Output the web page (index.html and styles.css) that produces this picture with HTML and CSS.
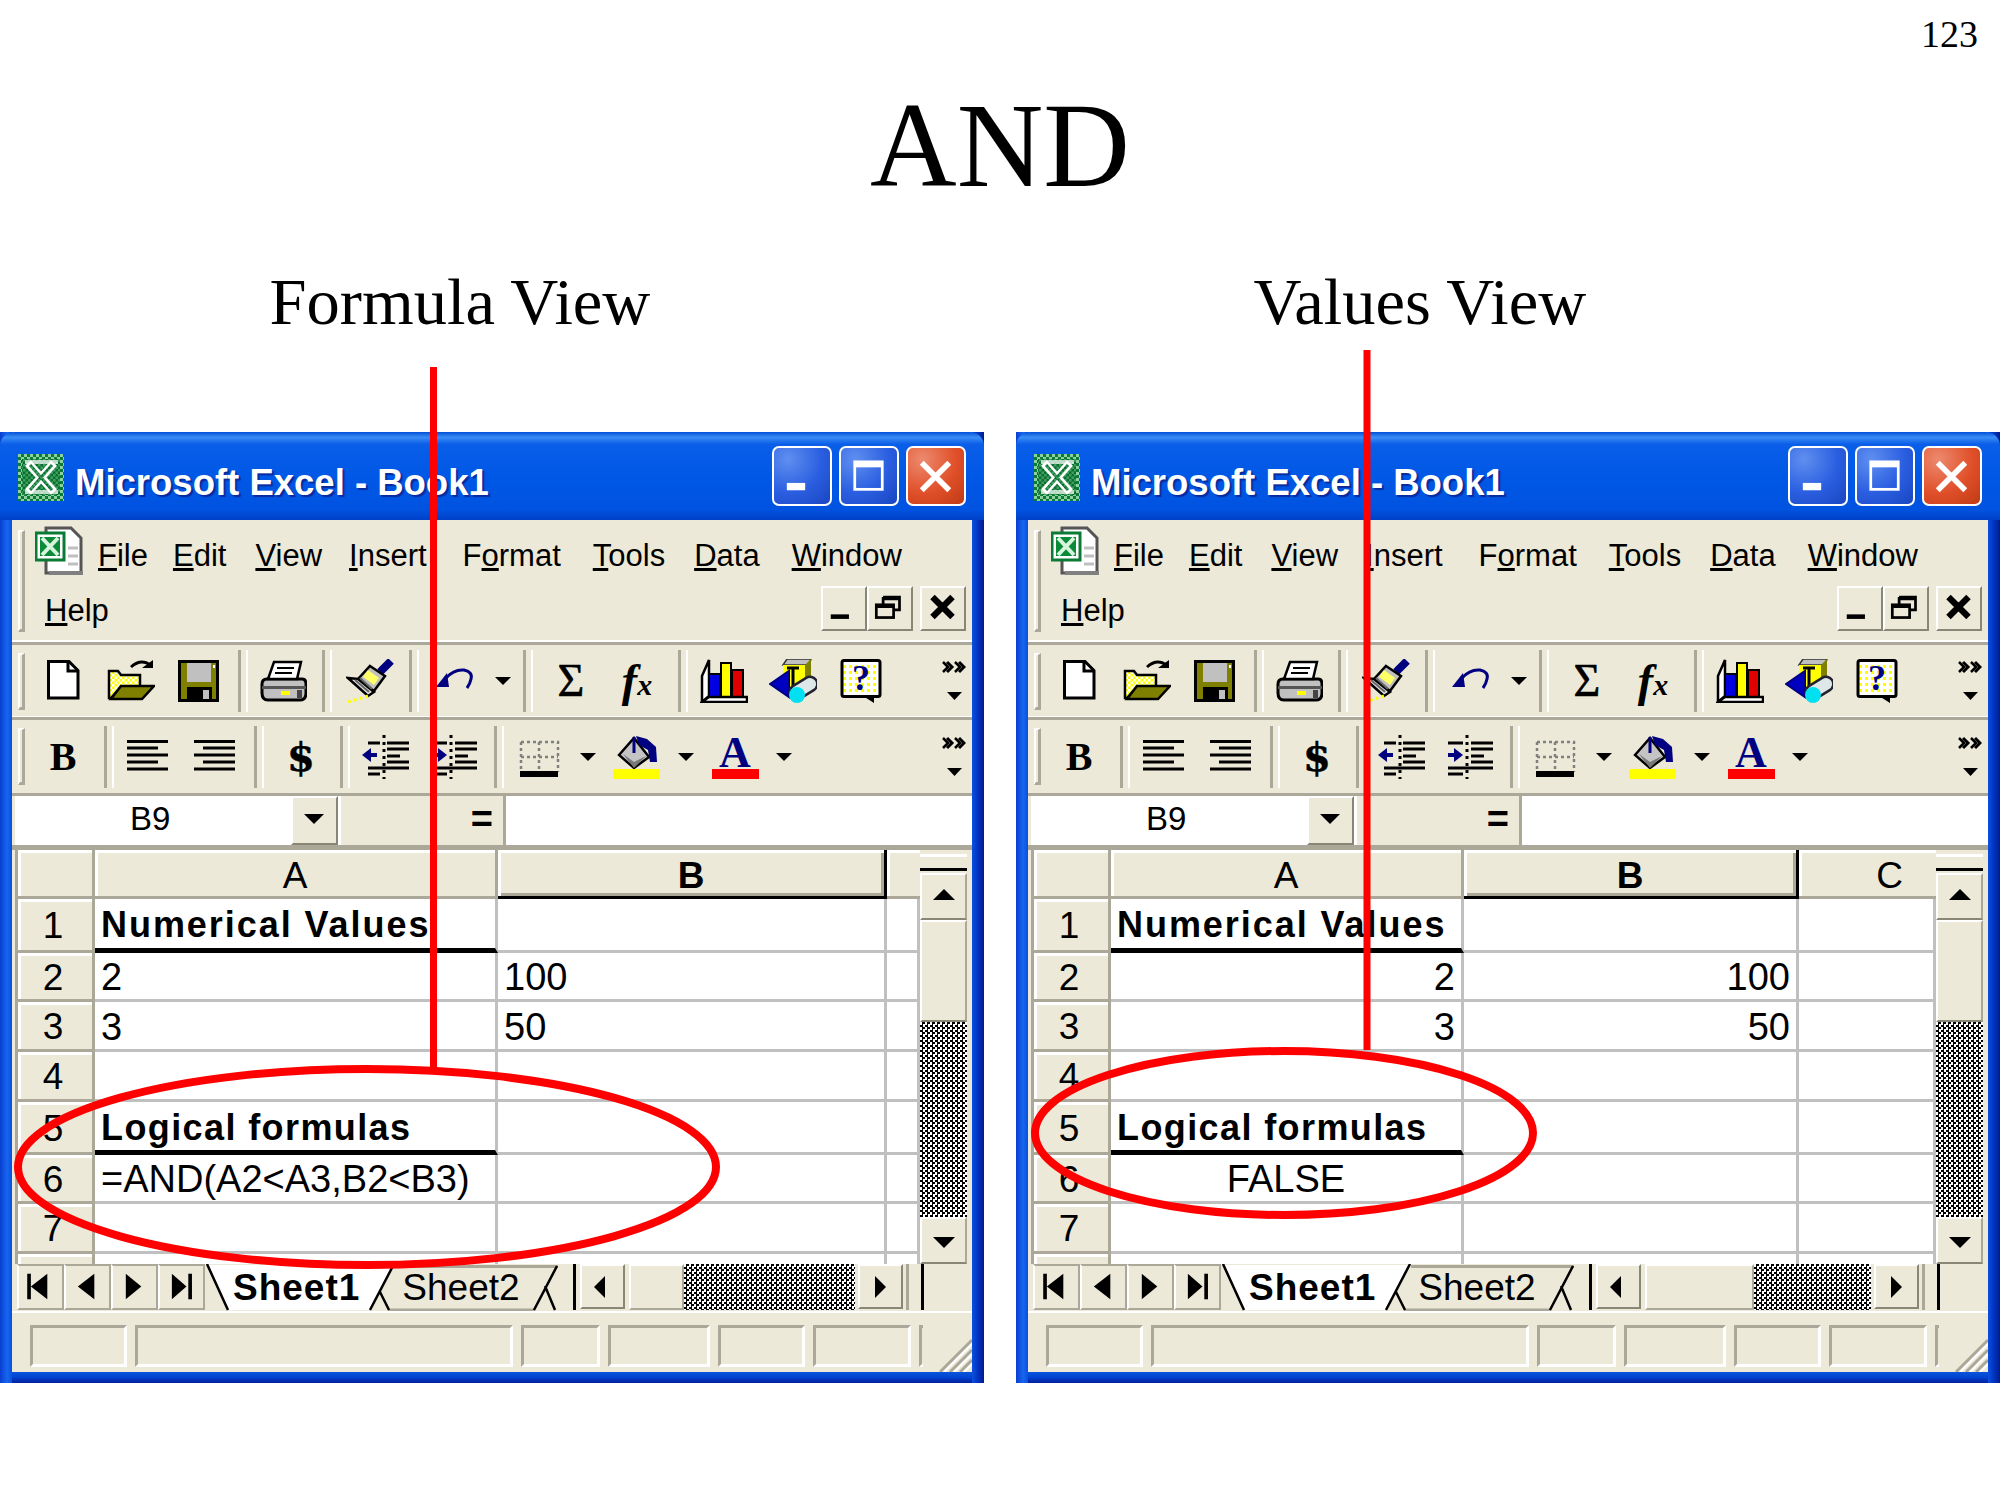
FILE: index.html
```html
<!DOCTYPE html>
<html lang="en">
<head>
<meta charset="utf-8">
<title>AND</title>
<link rel="stylesheet" href="styles.css">
</head>
<body>
<svg class="defs" aria-hidden="true">
  <defs>
    <pattern id="p-green" width="6" height="6" patternUnits="userSpaceOnUse"><rect width="6" height="6" fill="#0b7a35"/><rect width="3" height="3" fill="#8fd09f"/><rect x="3" y="3" width="3" height="3" fill="#8fd09f"/></pattern>
    <pattern id="p-deep" width="5" height="5" patternUnits="userSpaceOnUse"><rect width="5" height="5" fill="#0a6e30"/><rect width="2.5" height="2.5" fill="#3f9f5f"/><rect x="2.5" y="2.5" width="2.5" height="2.5" fill="#3f9f5f"/></pattern>
    <pattern id="p-yellow" width="5" height="5" patternUnits="userSpaceOnUse"><rect width="5" height="5" fill="#ffff00"/><rect width="2.5" height="2.5" fill="#fff"/><rect x="2.5" y="2.5" width="2.5" height="2.5" fill="#fff"/></pattern>
    <pattern id="p-dots" width="6" height="6" patternUnits="userSpaceOnUse"><rect width="6" height="6" fill="#fff"/><rect width="3" height="3" fill="#ffff00"/></pattern>
    <symbol id="i-xl" viewBox="0 0 46 47"><rect width="46" height="47" fill="url(#p-green)"/><rect x="4" y="5" width="38" height="36" fill="url(#p-deep)"/><path d="M7 6H40V10H7ZM7 36H40V40H7Z" fill="#fff" opacity=".7"/><path d="M10 9 36 38M36 9 10 38" stroke="#fff" stroke-width="8"/><path d="M12 11 34 36M34 11 12 36" stroke="url(#p-deep)" stroke-width="3"/></symbol>
    <symbol id="i-doc" viewBox="0 0 48 50"><path d="M11 2H36L46 12V47H11Z" fill="#fff" stroke="#555" stroke-width="3"/><path d="M14 47H48" stroke="#808080" stroke-width="4"/><path d="M33 22H43M33 30H43M33 38H43" stroke="#c0c0c0" stroke-width="3"/><rect x="1" y="7" width="28" height="27" fill="#fff" stroke="#0b7a35" stroke-width="3"/><rect x="5" y="11" width="20" height="19" fill="#0b8a3a"/><path d="M7 12 23 29M23 12 7 29" stroke="#d7f5dc" stroke-width="4"/></symbol>
    <symbol id="i-new" viewBox="0 0 48 44"><path d="M9.5 2.5H30L39 11.5V39H9.5Z" fill="#fff" stroke="#000" stroke-width="3"/><path d="M29 3V12H39" fill="none" stroke="#000" stroke-width="3"/></symbol>
    <symbol id="i-open" viewBox="0 0 48 44"><path d="M2 39V12H11L14 16H33V28L14 28 4 39Z" fill="url(#p-yellow)" stroke="#000" stroke-width="2.5"/><path d="M4 40 14 27H47L35 40Z" fill="#808000" stroke="#000" stroke-width="2.5"/><path d="M24 8Q33 0 42 5" fill="none" stroke="#000" stroke-width="3"/><path d="M35 9H46V1Z"/></symbol>
    <symbol id="i-save" viewBox="0 0 48 44"><rect x="3" y="1" width="41" height="42"/><rect x="6" y="4" width="35" height="36" fill="#808000"/><rect x="12" y="4" width="24" height="19" fill="#c0c0c0"/><rect x="38" y="6" width="2" height="3" fill="#fff"/><rect x="12" y="28" width="25" height="15"/><rect x="28" y="31" width="6" height="9" fill="#c0c0c0"/></symbol>
    <symbol id="i-print" viewBox="0 0 48 44"><path d="M3 25Q3 20 8 20H43Q47 20 47 25V34Q47 41 41 41H9Q3 41 3 34Z" fill="#c0c0c0" stroke="#000" stroke-width="3"/><path d="M15 3H42L38 20H9Z" fill="#fff" stroke="#000" stroke-width="2.5"/><path d="M18 9H35M16 14H33" stroke="#000" stroke-width="2"/><rect x="3" y="27" width="44" height="3" fill="#555"/><rect x="22" y="32" width="9" height="4" fill="#ffff00"/><rect x="38" y="31" width="5" height="8" fill="#444"/></symbol>
    <symbol id="i-brush" viewBox="0 0 48 44"><path d="M34 13 45 2" stroke="#000080" stroke-width="8"/><path d="M24 7 39 17 28 32 12 20Z" fill="#c0c0c0" stroke="#000" stroke-width="2.5"/><path d="M22 11 33 19 28 26 17 18Z" fill="#ffff66"/><path d="M12 20 28 33 22 37 2 19Z" fill="#e4e4e4" stroke="#000" stroke-width="2.5"/><path d="M9 21 23 33M14 19 26 30" stroke="#666" stroke-width="2"/><path d="M2 43 22 37" stroke="#ffff00" stroke-width="3" stroke-dasharray="3 3"/></symbol>
    <symbol id="i-undo" viewBox="0 0 48 44"><path d="M16 19Q24 10 34 11Q43 13 41 20Q40 25 37 29" fill="none" stroke="#000080" stroke-width="3"/><path d="M6 28H19L17 14Z" fill="#000080"/></symbol>
    <symbol id="i-chart" viewBox="0 0 48 44"><path d="M2 43V17L9 1V37Z" fill="#fff" stroke="#000" stroke-width="2.5"/><rect x="9" y="15" width="11" height="23" fill="#0000e0" stroke="#000" stroke-width="2"/><rect x="21" y="4" width="10" height="34" fill="#ffff00" stroke="#000" stroke-width="2"/><rect x="32" y="11" width="11" height="27" fill="#e00000" stroke="#000" stroke-width="2"/><path d="M2 43H47V38H9L2 43Z" fill="#fff" stroke="#000" stroke-width="2.5"/></symbol>
    <symbol id="i-map" viewBox="0 0 48 44"><path d="M14 6 18 0H42L40 6Z" fill="#c0c0c0" stroke="#333" stroke-width="1.5"/><rect x="14" y="6" width="26" height="26" fill="#ffff00"/><path d="M36 6 42 0V26L36 32Z" fill="#808000"/><path d="M18 9H30M24 9V30" stroke="#000" stroke-width="3"/><path d="M1 25 20 12V38Z" fill="#0000c0" stroke="#000080" stroke-width="2"/><path d="M28 33 41 25" stroke="#223" stroke-width="17" stroke-linecap="round"/><path d="M28 33 41 25" stroke="#dfe8e8" stroke-width="12" stroke-linecap="round"/><circle cx="28" cy="36" r="8" fill="#00e0f0"/></symbol>
    <symbol id="i-help" viewBox="0 0 48 44"><rect x="5" y="1.5" width="38" height="36" rx="2" fill="url(#p-dots)" stroke="#000" stroke-width="3"/><path d="M26 37H37V44Z"/><text x="24" y="31" class="help-q">?</text></symbol>
    <symbol id="i-alignl" viewBox="0 0 48 44"><path d="M3 6.500H44M3 13H34M3 20H44M3 27H34M3 34H44" stroke="#000" stroke-width="3"/></symbol>
    <symbol id="i-alignr" viewBox="0 0 48 44"><path d="M4 6.500H45M13 13H45M4 20H45M13 27H45M4 34H45" stroke="#000" stroke-width="3"/></symbol>
    <symbol id="i-outdent" viewBox="0 0 48 44"><path d="M1 20 10 13V27Z" fill="#000080"/><rect x="9" y="18" width="7" height="4" fill="#000080"/><path d="M7 8H19M26 8H48M26 14H48M26 21H39M7 33H48M7 39H19M26 27H48" stroke="#000" stroke-width="3"/><path d="M23 0V44" stroke="#000" stroke-width="3" stroke-dasharray="3 4"/></symbol>
    <symbol id="i-indent" viewBox="0 0 48 44"><path d="M18 20 9 13V27Z" fill="#000080"/><rect x="3" y="18" width="7" height="4" fill="#000080"/><path d="M3 8H18M26 8H48M26 14H48M26 21H39M3 33H48M3 39H18M26 27H48" stroke="#000" stroke-width="3"/><path d="M22 0V44" stroke="#000" stroke-width="3" stroke-dasharray="3 4"/></symbol>
    <symbol id="i-border" viewBox="0 0 48 44"><path d="M6 7H43V37M6 7V37M6 22H43M24 7V37" fill="none" stroke="#808080" stroke-width="2.500" stroke-dasharray="3 3"/><rect x="5" y="36" width="38" height="6"/></symbol>
    <symbol id="i-fill" viewBox="0 0 48 44"><path d="M6 20 21 3 36 22 21 33Z" fill="#c4c4c4" stroke="#000" stroke-width="2.500"/><path d="M10 19 21 27 33 21 21 33Z" fill="#777"/><path d="M23 1 34 4 43 12 44 27 37 27 35 15 26 10Z" fill="#000080"/><path d="M21 2V18" stroke="#000080" stroke-width="3"/><rect y="34" width="47" height="10" fill="#ffff00"/></symbol>
    <symbol id="i-more" viewBox="0 0 24 42"><path d="M1 2 6 7 1 12" fill="none" stroke="#000" stroke-width="2.500"/><path d="M5 2 10 7 5 12" fill="none" stroke="#000" stroke-width="3"/><path d="M13 2 18 7 13 12" fill="none" stroke="#000" stroke-width="2.500"/><path d="M17 2 22 7 17 12" fill="none" stroke="#000" stroke-width="3"/><path d="M5 32H20L12.500 40Z"/></symbol>
    <symbol id="i-tmin" viewBox="0 0 60 60"><rect x="14" y="37" width="20" height="8" fill="#fff"/></symbol>
    <symbol id="i-tmax" viewBox="0 0 60 60"><rect x="15" y="14" width="30" height="30" fill="none" stroke="#fff" stroke-width="3"/><rect x="15" y="14" width="30" height="6" fill="#fff"/></symbol>
    <symbol id="i-tclose" viewBox="0 0 60 60"><path d="M15 15 45 45M45 15 15 45" stroke="#fff" stroke-width="6"/></symbol>
    <symbol id="i-mmin" viewBox="0 0 44 44"><rect x="8" y="29" width="20" height="5"/></symbol>
    <symbol id="i-mres" viewBox="0 0 44 44"><path d="M15 10H33V24H26M15 10V18M15 12H33" fill="none" stroke="#000" stroke-width="3"/><rect x="7.500" y="18.500" width="19" height="14" fill="none" stroke="#000" stroke-width="3"/><rect x="7" y="18" width="20" height="4"/></symbol>
    <symbol id="i-mclose" viewBox="0 0 44 44"><path d="M11 10 33 32M33 10 11 32" stroke="#000" stroke-width="7"/></symbol>
    <symbol id="i-first" viewBox="0 0 46 44"><rect x="9" y="8" width="4" height="28"/><path d="M31 8V36L13 22Z"/></symbol>
    <symbol id="i-prev" viewBox="0 0 46 44"><path d="M31 8V36L13 22Z"/></symbol>
    <symbol id="i-next" viewBox="0 0 46 44"><path d="M14 8V36L31 22Z"/></symbol>
    <symbol id="i-last" viewBox="0 0 46 44"><path d="M13 8V36L29 22Z"/><rect x="31" y="8" width="4" height="28"/></symbol>
    <symbol id="i-tabs" viewBox="0 0 369 47"><path d="M2 1 23 46H165L190 1Z" fill="#fff"/><path d="M190 2.500H353M183 46H330" stroke="#aca899" stroke-width="3"/><path d="M2 0 23 46M165 46 189 0M175 28 184 46M329 46 352 2M340 22 350 46" stroke="#000" stroke-width="2.500" fill="none"/></symbol>
    <symbol id="i-gripper" viewBox="0 0 36 36"><path d="M4 36 36 4M14 36 36 14M24 36 36 24" stroke="#aca899" stroke-width="3"/><path d="M8 36 36 8M18 36 36 18M28 36 36 28" stroke="#fff" stroke-width="2"/></symbol>
  </defs>
</svg>

<main class="slide">
  <div class="page-no">123</div>
  <h1 class="title">AND</h1>
  <div class="captions">
    <h2 class="caption">Formula View</h2>
    <h2 class="caption">Values View</h2>
  </div>

  <div class="desktop">
    <section class="window win-formula">
      <header class="titlebar">
        <svg class="tb-icon"><use href="#i-xl"/></svg>
        <span class="tb-text">Microsoft Excel - Book1</span>
        <div class="tb-buttons">
          <button class="wbtn"><svg class="wbtn-i"><use href="#i-tmin"/></svg></button>
          <button class="wbtn"><svg class="wbtn-i"><use href="#i-tmax"/></svg></button>
          <button class="wbtn wbtn-close"><svg class="wbtn-i"><use href="#i-tclose"/></svg></button>
        </div>
      </header>
      <div class="client">
        <nav class="menubar">
          <span class="grip grip-tall"></span>
          <div class="menu-rows">
            <div class="menu-row">
              <svg class="doc-icon"><use href="#i-doc"/></svg>
              <span class="mi"><u>F</u>ile</span><span class="mi"><u>E</u>dit</span><span class="mi"><u>V</u>iew</span><span class="mi"><u>I</u>nsert</span><span class="mi">F<u>o</u>rmat</span><span class="mi"><u>T</u>ools</span><span class="mi"><u>D</u>ata</span><span class="mi"><u>W</u>indow</span>
            </div>
            <div class="menu-row menu-row-2">
              <span class="mi mi-help"><u>H</u>elp</span>
              <div class="mdi">
                <span class="mbtn"><svg class="mbtn-i"><use href="#i-mmin"/></svg></span><span class="mbtn"><svg class="mbtn-i"><use href="#i-mres"/></svg></span><span class="mbtn mbtn-close"><svg class="mbtn-i"><use href="#i-mclose"/></svg></span>
              </div>
            </div>
          </div>
        </nav>
        <div class="toolbar tb-std">
          <span class="grip"></span>
          <span class="tool"><svg class="ico"><use href="#i-new"/></svg></span>
          <span class="tool"><svg class="ico"><use href="#i-open"/></svg></span>
          <span class="tool"><svg class="ico"><use href="#i-save"/></svg></span>
          <span class="sep"></span>
          <span class="tool"><svg class="ico"><use href="#i-print"/></svg></span>
          <span class="sep sep-w"></span>
          <span class="tool"><svg class="ico"><use href="#i-brush"/></svg></span>
          <span class="sep"></span>
          <span class="tool"><svg class="ico"><use href="#i-undo"/></svg></span>
          <span class="drop"></span>
          <span class="sep sep-w"></span>
          <span class="tool glyph-sigma">Σ</span>
          <span class="tool glyph-fx"><i class="fx-f">f</i><i class="fx-x">x</i></span>
          <span class="sep"></span>
          <span class="tool tool-w"><svg class="ico"><use href="#i-chart"/></svg></span>
          <span class="tool tool-w"><svg class="ico"><use href="#i-map"/></svg></span>
          <span class="tool"><svg class="ico"><use href="#i-help"/></svg></span>
          <svg class="more"><use href="#i-more"/></svg>
        </div>
        <div class="toolbar tb-fmt">
          <span class="grip"></span>
          <span class="tool glyph-b">B</span>
          <span class="sep"></span>
          <span class="tool tool-n"><svg class="ico"><use href="#i-alignl"/></svg></span>
          <span class="tool tool-n"><svg class="ico"><use href="#i-alignr"/></svg></span>
          <span class="sep"></span>
          <span class="tool glyph-dollar">$</span>
          <span class="sep"></span>
          <span class="tool"><svg class="ico"><use href="#i-outdent"/></svg></span>
          <span class="tool"><svg class="ico"><use href="#i-indent"/></svg></span>
          <span class="sep"></span>
          <span class="tool"><svg class="ico"><use href="#i-border"/></svg></span>
          <span class="drop"></span>
          <span class="tool"><svg class="ico"><use href="#i-fill"/></svg></span>
          <span class="drop"></span>
          <span class="tool tool-a"><span class="glyph-a">A</span><span class="swatch"></span></span>
          <span class="drop"></span>
          <svg class="more"><use href="#i-more"/></svg>
        </div>
        <div class="formula-bar">
          <div class="namebox"><span class="namebox-text">B9</span><span class="combo"></span></div>
          <div class="fx-area">=</div>
          <div class="formula-input"></div>
        </div>
        <div class="sheet-wrap">
          <div class="sheet">
            <div class="hdr"></div><div class="hdr">A</div><div class="hdr hdr-sel">B</div><div class="hdr hdr-last"></div>
            <div class="rh">1</div><div class="cell cell-b cell-wide under">Numerical Values</div><div class="cell"></div><div class="cell"></div>
            <div class="rh">2</div><div class="cell">2</div><div class="cell">100</div><div class="cell"></div>
            <div class="rh">3</div><div class="cell">3</div><div class="cell">50</div><div class="cell"></div>
            <div class="rh">4</div><div class="cell"></div><div class="cell"></div><div class="cell"></div>
            <div class="rh">5</div><div class="cell cell-b under">Logical formulas</div><div class="cell"></div><div class="cell"></div>
            <div class="rh">6</div><div class="cell">=AND(A2&lt;A3,B2&lt;B3)</div><div class="cell"></div><div class="cell"></div>
            <div class="rh">7</div><div class="cell"></div><div class="cell"></div><div class="cell"></div>
            <div class="rh rh-end"></div><div class="cell cell-end"></div><div class="cell cell-end"></div><div class="cell cell-end"></div>
          </div>
          <div class="vscroll">
            <span class="vsplit"></span>
            <span class="sbtn sbtn-v"><span class="tri-up"></span></span>
            <span class="vthumb"></span>
            <span class="checker"></span>
            <span class="sbtn sbtn-v"><span class="tri-down"></span></span>
          </div>
        </div>
        <div class="tabbar">
          <span class="navbtn"><svg class="nav-i"><use href="#i-first"/></svg></span><span class="navbtn"><svg class="nav-i"><use href="#i-prev"/></svg></span><span class="navbtn"><svg class="nav-i"><use href="#i-next"/></svg></span><span class="navbtn"><svg class="nav-i"><use href="#i-last"/></svg></span>
          <div class="tabs">
            <svg class="tabs-art"><use href="#i-tabs"/></svg>
            <span class="tab tab-on">Sheet1</span><span class="tab">Sheet2</span>
          </div>
          <span class="hsplit"></span>
          <span class="sbtn sbtn-h"><span class="tri-left"></span></span>
          <span class="hthumb"></span>
          <span class="checker"></span>
          <span class="sbtn sbtn-h"><span class="tri-right"></span></span>
          <span class="hend"></span>
        </div>
        <footer class="status">
          <span class="panel p1"></span><span class="panel p2"></span><span class="panel p3"></span><span class="panel p4"></span><span class="panel p5"></span><span class="panel p6"></span><span class="panel p7"></span>
          <svg class="gripper"><use href="#i-gripper"/></svg>
        </footer>
      </div>
    </section>

    <section class="window win-values">
      <header class="titlebar">
        <svg class="tb-icon"><use href="#i-xl"/></svg>
        <span class="tb-text">Microsoft Excel - Book1</span>
        <div class="tb-buttons">
          <button class="wbtn"><svg class="wbtn-i"><use href="#i-tmin"/></svg></button>
          <button class="wbtn"><svg class="wbtn-i"><use href="#i-tmax"/></svg></button>
          <button class="wbtn wbtn-close"><svg class="wbtn-i"><use href="#i-tclose"/></svg></button>
        </div>
      </header>
      <div class="client">
        <nav class="menubar">
          <span class="grip grip-tall"></span>
          <div class="menu-rows">
            <div class="menu-row">
              <svg class="doc-icon"><use href="#i-doc"/></svg>
              <span class="mi"><u>F</u>ile</span><span class="mi"><u>E</u>dit</span><span class="mi"><u>V</u>iew</span><span class="mi"><u>I</u>nsert</span><span class="mi">F<u>o</u>rmat</span><span class="mi"><u>T</u>ools</span><span class="mi"><u>D</u>ata</span><span class="mi"><u>W</u>indow</span>
            </div>
            <div class="menu-row menu-row-2">
              <span class="mi mi-help"><u>H</u>elp</span>
              <div class="mdi">
                <span class="mbtn"><svg class="mbtn-i"><use href="#i-mmin"/></svg></span><span class="mbtn"><svg class="mbtn-i"><use href="#i-mres"/></svg></span><span class="mbtn mbtn-close"><svg class="mbtn-i"><use href="#i-mclose"/></svg></span>
              </div>
            </div>
          </div>
        </nav>
        <div class="toolbar tb-std">
          <span class="grip"></span>
          <span class="tool"><svg class="ico"><use href="#i-new"/></svg></span>
          <span class="tool"><svg class="ico"><use href="#i-open"/></svg></span>
          <span class="tool"><svg class="ico"><use href="#i-save"/></svg></span>
          <span class="sep"></span>
          <span class="tool"><svg class="ico"><use href="#i-print"/></svg></span>
          <span class="sep sep-w"></span>
          <span class="tool"><svg class="ico"><use href="#i-brush"/></svg></span>
          <span class="sep"></span>
          <span class="tool"><svg class="ico"><use href="#i-undo"/></svg></span>
          <span class="drop"></span>
          <span class="sep sep-w"></span>
          <span class="tool glyph-sigma">Σ</span>
          <span class="tool glyph-fx"><i class="fx-f">f</i><i class="fx-x">x</i></span>
          <span class="sep"></span>
          <span class="tool tool-w"><svg class="ico"><use href="#i-chart"/></svg></span>
          <span class="tool tool-w"><svg class="ico"><use href="#i-map"/></svg></span>
          <span class="tool"><svg class="ico"><use href="#i-help"/></svg></span>
          <svg class="more"><use href="#i-more"/></svg>
        </div>
        <div class="toolbar tb-fmt">
          <span class="grip"></span>
          <span class="tool glyph-b">B</span>
          <span class="sep"></span>
          <span class="tool tool-n"><svg class="ico"><use href="#i-alignl"/></svg></span>
          <span class="tool tool-n"><svg class="ico"><use href="#i-alignr"/></svg></span>
          <span class="sep"></span>
          <span class="tool glyph-dollar">$</span>
          <span class="sep"></span>
          <span class="tool"><svg class="ico"><use href="#i-outdent"/></svg></span>
          <span class="tool"><svg class="ico"><use href="#i-indent"/></svg></span>
          <span class="sep"></span>
          <span class="tool"><svg class="ico"><use href="#i-border"/></svg></span>
          <span class="drop"></span>
          <span class="tool"><svg class="ico"><use href="#i-fill"/></svg></span>
          <span class="drop"></span>
          <span class="tool tool-a"><span class="glyph-a">A</span><span class="swatch"></span></span>
          <span class="drop"></span>
          <svg class="more"><use href="#i-more"/></svg>
        </div>
        <div class="formula-bar">
          <div class="namebox"><span class="namebox-text">B9</span><span class="combo"></span></div>
          <div class="fx-area">=</div>
          <div class="formula-input"></div>
        </div>
        <div class="sheet-wrap">
          <div class="sheet">
            <div class="hdr"></div><div class="hdr">A</div><div class="hdr hdr-sel">B</div><div class="hdr hdr-c">C</div>
            <div class="rh">1</div><div class="cell cell-b cell-wide under">Numerical Values</div><div class="cell"></div><div class="cell"></div>
            <div class="rh">2</div><div class="cell cell-r">2</div><div class="cell cell-r">100</div><div class="cell"></div>
            <div class="rh">3</div><div class="cell cell-r">3</div><div class="cell cell-r">50</div><div class="cell"></div>
            <div class="rh">4</div><div class="cell"></div><div class="cell"></div><div class="cell"></div>
            <div class="rh">5</div><div class="cell cell-b under">Logical formulas</div><div class="cell"></div><div class="cell"></div>
            <div class="rh">6</div><div class="cell cell-c">FALSE</div><div class="cell"></div><div class="cell"></div>
            <div class="rh">7</div><div class="cell"></div><div class="cell"></div><div class="cell"></div>
            <div class="rh rh-end"></div><div class="cell cell-end"></div><div class="cell cell-end"></div><div class="cell cell-end"></div>
          </div>
          <div class="vscroll">
            <span class="vsplit"></span>
            <span class="sbtn sbtn-v"><span class="tri-up"></span></span>
            <span class="vthumb"></span>
            <span class="checker"></span>
            <span class="sbtn sbtn-v"><span class="tri-down"></span></span>
          </div>
        </div>
        <div class="tabbar">
          <span class="navbtn"><svg class="nav-i"><use href="#i-first"/></svg></span><span class="navbtn"><svg class="nav-i"><use href="#i-prev"/></svg></span><span class="navbtn"><svg class="nav-i"><use href="#i-next"/></svg></span><span class="navbtn"><svg class="nav-i"><use href="#i-last"/></svg></span>
          <div class="tabs">
            <svg class="tabs-art"><use href="#i-tabs"/></svg>
            <span class="tab tab-on">Sheet1</span><span class="tab">Sheet2</span>
          </div>
          <span class="hsplit"></span>
          <span class="sbtn sbtn-h"><span class="tri-left"></span></span>
          <span class="hthumb"></span>
          <span class="checker"></span>
          <span class="sbtn sbtn-h"><span class="tri-right"></span></span>
          <span class="hend"></span>
        </div>
        <footer class="status">
          <span class="panel p1"></span><span class="panel p2"></span><span class="panel p3"></span><span class="panel p4"></span><span class="panel p5"></span><span class="panel p6"></span><span class="panel p7"></span>
          <svg class="gripper"><use href="#i-gripper"/></svg>
        </footer>
      </div>
    </section>
  </div>

  <svg class="annot" viewBox="0 0 2000 1500" aria-hidden="true">
    <path class="annot-line" d="M433.500 367V1068"/>
    <path class="annot-line" d="M1367 350V1050"/>
    <ellipse class="annot-oval" cx="367" cy="1167" rx="349" ry="98"/>
    <ellipse class="annot-oval" cx="1284" cy="1133" rx="249" ry="82"/>
  </svg>
</main>
</body>
</html>
```
FILE: styles.css
```css
* { box-sizing: border-box; }
html, body { margin: 0; padding: 0; background: #fff; }
.defs { position: absolute; width: 0; height: 0; }

.slide {
  position: relative;
  width: 2000px;
  height: 1500px;
  overflow: hidden;
  background: #fff;
  color: #000;
  font-family: "Liberation Serif", serif;
}
.page-no { height: 60px; padding: 12px 22px 0 0; text-align: right; font-size: 38px; line-height: 44px; }
.title { margin: 0; height: 160px; padding-top: 12px; text-align: center; font-size: 120px; line-height: 148px; font-weight: 400; }
.captions { display: grid; grid-template-columns: 920px 1000px; height: 212px; }
.caption { margin: 0; padding-top: 43px; text-align: center; font-size: 66.500px; line-height: 78px; font-weight: 400; }

.desktop { display: flex; gap: 32px; }
.window {
  width: 984px;
  height: 951px;
  flex: none;
  display: flex;
  flex-direction: column;
  background:
    linear-gradient(to right, #0a3ed0, #1666ee 60%, #0a4fe0) left / 12px 100% no-repeat,
    linear-gradient(to right, #0b50e0, #0033c0, #001c90) right / 12px 100% no-repeat,
    linear-gradient(#0855dd, #0043d0 50%, #001f9c) bottom / 100% 11px no-repeat,
    #ece9d8;
  font-family: "Liberation Sans", Arial, sans-serif;
  font-size: 38px;
}

/* Title bar */
.titlebar {
  height: 88px;
  flex: none;
  display: flex;
  align-items: center;
  padding: 0 18px;
  border-radius: 14px 14px 0 0;
  background: linear-gradient(#0050d8 0, #3a8cf5 6%, #0a5ee8 14%, #0058e6 50%, #0053e0 88%, #0040c8 100%);
}
.tb-icon { width: 46px; height: 47px; flex: none; margin-top: 2px; }
.tb-text {
  margin-left: 11px;
  margin-top: 14px;
  color: #fff;
  font-size: 36.500px;
  font-weight: 700;
  white-space: nowrap;
  text-shadow: 2px 2px 1px #0a2a9c;
}
.tb-buttons { margin-left: auto; display: flex; gap: 7px; }
.wbtn {
  width: 60px;
  height: 60px;
  padding: 0;
  border: 2.500px solid #fff;
  border-radius: 7px;
  background: radial-gradient(circle at 25% 20%, #5f8ff0, #2a5ee0 55%, #1a46c0 100%);
}
.wbtn-close { background: radial-gradient(circle at 25% 20%, #ec8a6e, #e0502a 55%, #c03a14 100%); }
.wbtn-i { display: block; width: 55px; height: 55px; }

/* Client */
.client { flex: 1; min-height: 0; margin: 0 12px 11px; display: flex; flex-direction: column; background: #ece9d8; }

.grip {
  width: 7px;
  height: 57px;
  flex: none;
  margin: 0 4px 0 6px;
  border-left: 2px solid #fff;
  border-top: 2px solid #fff;
  border-bottom: 3px solid #aca899;
  border-right: 3px solid #aca899;
}
.grip-tall { height: 102px; margin-top: 10px; }

/* Menu */
.menubar { height: 125px; flex: none; display: flex; border-bottom: 3px solid #aca899; box-shadow: inset 0 -2px 0 #fff; }
.menu-rows { flex: 1; min-width: 0; display: flex; flex-direction: column; }
.menu-row { height: 66px; display: flex; align-items: center; gap: 29px; padding-left: 6px; }
.menu-row-2 { height: 54px; align-items: flex-start; padding-left: 17px; padding-right: 6px; }
.doc-icon { width: 48px; height: 50px; flex: none; margin-right: -12px; margin-top: -4px; }
.mi { font-size: 31px; line-height: 36px; white-space: nowrap; margin-top: 5px; }
.menu-row .mi:nth-of-type(1) { margin-left: -2px; }
.menu-row .mi:nth-of-type(2) { margin-left: -4px; }
.menu-row .mi:nth-of-type(4) { margin-left: -2px; }
.menu-row .mi:nth-of-type(5) { margin-left: 7px; }
.menu-row .mi:nth-of-type(6) { margin-left: 3px; }
.menu-row .mi:nth-of-type(8) { margin-left: 3px; }
.menu-row .mi-help:nth-of-type(1) { margin: 7px 0 0 -1px; }
.mdi { margin-left: auto; display: flex; }
.mbtn {
  width: 46px;
  height: 45px;
  border: 2.500px solid;
  border-color: #fff #888674 #888674 #fff;
}
.mbtn-close { margin-left: 7px; }
.mbtn-i { display: block; width: 41px; height: 40px; }

/* Toolbars */
.toolbar { flex: none; display: flex; align-items: center; padding-right: 6px; border-bottom: 3px solid #aca899; }
.tb-std { height: 75px; box-shadow: inset 0 -1px 0 #fff; }
.tb-fmt { height: 76px; }
.tool { width: 68px; height: 44px; flex: none; display: flex; align-items: center; justify-content: center; }
.tool-n { width: 66px; }
.tool-w { width: 69px; }
.ico { display: block; width: 48px; height: 44px; }
.sep { width: 16px; height: 62px; flex: none; position: relative; }
.sep-w { width: 19px; }
.sep::before {
  content: "";
  position: absolute;
  left: 5px;
  top: 0;
  width: 5px;
  height: 100%;
  border-left: 3px solid #aca899;
  border-right: 2px solid #fff;
}
.tb-fmt .sep { width: 18px; }
.tb-fmt .sep::before { left: 7px; }
.drop { width: 30px; height: 12px; flex: none; position: relative; }
.drop::after {
  content: "";
  position: absolute;
  left: 7px;
  top: 2px;
  border-left: 8px solid transparent;
  border-right: 8px solid transparent;
  border-top: 8px solid #000;
}
.more { width: 24px; height: 42px; flex: none; margin-left: auto; }
.glyph-sigma { font: 400 46px/44px "Liberation Serif", serif; -webkit-text-stroke: .6px #000; }
.glyph-fx { font: italic 700 44px/44px "Liberation Serif", serif; padding-right: 4px; }
.fx-f { font-size: 46px; }
.fx-x { font-size: 30px; margin-top: 8px; }
.glyph-b { font: 700 40px/44px "Liberation Serif", serif; }
.glyph-dollar { font: 700 40px/44px "DejaVu Serif", serif; padding-left: 4px; -webkit-text-stroke: .5px #000; }
.tool-a { flex-direction: column; justify-content: flex-start; }
.glyph-a { height: 34px; font: 700 44px/36px "Liberation Serif", serif; color: #000080; }
.swatch { width: 47px; height: 10px; background: #f00; }

/* Formula bar */
.formula-bar { height: 54px; flex: none; display: flex; padding-left: 3px; border-bottom: 5px solid #aca899; }
.namebox { width: 323px; flex: none; display: flex; align-items: stretch; background: #fff; }
.namebox-text { width: 276px; padding-left: 115px; font-size: 33px; line-height: 46px; }
.combo {
  width: 47px;
  margin-left: auto;
  position: relative;
  background: #ece9d8;
  border: 2.500px solid;
  border-color: #fff #888674 #888674 #fff;
}
.combo::after {
  content: "";
  position: absolute;
  left: 11px;
  top: 16px;
  border-left: 10px solid transparent;
  border-right: 10px solid transparent;
  border-top: 10px solid #000;
}
.fx-area { width: 168px; flex: none; padding-right: 10px; text-align: right; font-size: 38px; font-weight: 700; line-height: 46px; border-left: 3px solid #fff; border-right: 3px solid #aca899; }
.formula-input { flex: 1; background: #fff; }

/* Sheet */
.sheet-wrap { height: 414px; flex: none; display: flex; padding-left: 3px; }
.sheet {
  width: 905px;
  flex: none;
  display: grid;
  grid-template-rows: 49px 54px 49px 50px 50px 53px 49px 50px 10px;
  border-left: 3px solid #aca899;
  overflow: hidden;
  background: #fff;
}
.win-formula .sheet { grid-template-columns: 77px 403px 389px 33px; }
.win-values .sheet { grid-template-columns: 77px 353px 335px 137px; }
.hdr, .rh {
  display: flex;
  align-items: center;
  justify-content: center;
  background: #ece9d8;
  border-right: 3px solid #aca899;
  border-bottom: 3px solid #aca899;
  box-shadow: inset 3px 3px 0 #fff;
  font-size: 37px;
}
.hdr { padding-top: 5px; }
.rh { padding: 3px 4px 0 0; }
.hdr-sel { font-weight: 700; border-right-color: #000; border-bottom-color: #000; box-shadow: inset 3px 3px 0 #fff, inset -3px -3px 0 #aca899; }
.hdr-last, .hdr-c { border-right: 0; }
.hdr-c { justify-content: flex-end; padding-right: 33px; }
.rh-end { border-bottom: 0; }
.cell {
  min-width: 0;
  padding: 3px 6px 0;
  display: flex;
  align-items: center;
  white-space: nowrap;
  overflow: hidden;
  border-right: 3px solid #c0c0c0;
  border-bottom: 3px solid #c0c0c0;
  font-size: 38px;
}
.cell-b { font-size: 36px; font-weight: 700; letter-spacing: 1.400px; }
.cell-wide { letter-spacing: 1.950px; }
.under { border-bottom: 5px solid #000; }
.cell-r { justify-content: flex-end; }
.cell-c { justify-content: center; }
.cell-end { border-bottom: 0; }

/* Scrollbars */
.vscroll { width: 47px; flex: none; display: flex; flex-direction: column; }
.vsplit { height: 17px; flex: none; margin-top: 4px; margin-bottom: 2px; border-bottom: 3px solid #000; box-shadow: inset 0 3px 0 #fff; }
.sbtn { display: flex; align-items: center; justify-content: center; background: #ece9d8; flex: none; border: 2.500px solid; border-color: #fff #aca899 #888674 #fff; }
.sbtn-v { width: 47px; height: 47px; }
.sbtn-v:nth-of-type(2) { padding-bottom: 5px; }
.sbtn-v:last-child { padding-top: 3px; }
.sbtn-h { width: 45px; height: 45px; }
.vthumb { height: 102px; flex: none; background: #ece9d8; border: 2.500px solid; border-color: #fff #aca899 #888674 #fff; }
.checker { flex: 1; background: repeating-conic-gradient(#000 0 25%, #fff 0 50%) 0 0 / 5px 5px; }
.tri-up, .tri-down { border-left: 11px solid transparent; border-right: 11px solid transparent; }
.tri-up { border-bottom: 11px solid #000; }
.tri-down { border-top: 11px solid #000; }
.tri-left, .tri-right { border-top: 11px solid transparent; border-bottom: 11px solid transparent; }
.tri-left { border-right: 11px solid #000; }
.tri-right { border-left: 11px solid #000; }

/* Tabs */
.tabbar { height: 47px; flex: none; display: flex; align-items: flex-start; padding: 0 48px 0 5px; }
.navbtn { width: 47px; height: 46px; flex: none; border: 2.500px solid; border-color: #aca899 #aca899 #aca899 #fff; }
.nav-i { display: block; width: 42px; height: 41px; }
.tabs { position: relative; width: 368px; height: 47px; flex: none; display: flex; align-items: center; gap: 42px; padding-left: 28px; }
.tabs-art { position: absolute; left: 0; top: 0; width: 369px; height: 47px; }
.tab { position: relative; font-size: 37px; white-space: nowrap; }
.tab-on { font-weight: 700; letter-spacing: 1px; }
.hsplit { width: 7px; height: 46px; flex: none; border-left: 3px solid #000; }
.hthumb { flex: none; height: 46px; margin-left: 4px; border: 2.500px solid; border-color: #fff #aca899 #aca899 #fff; }
.win-formula .hthumb { width: 55px; }
.win-values .hthumb { width: 109px; }
.tabbar .checker { height: 46px; }
.tabbar .sbtn-h { border-color: #fff #888674 #888674 #fff; }
.tabbar .sbtn-h:first-of-type { margin-left: 0; }
.tri-left { margin-right: 6px; }
.hend { width: 18px; height: 46px; flex: none; margin-left: 3px; border-left: 3px solid #aca899; border-right: 3px solid #000; }
.tabbar .checker + .sbtn-h { margin-left: 3px; }

/* Status bar */
.status { position: relative; height: 61px; flex: none; display: flex; align-items: flex-start; gap: 8px; padding: 14px 0 0 18px; box-shadow: inset 0 2px 0 #fff; }
.panel { height: 42px; flex: none; border: 3px solid; border-color: #aca899 #fff #fff #aca899; }
.p1 { width: 97px; }
.p2 { width: 378px; }
.p3 { width: 79px; }
.p4 { width: 102px; }
.p5 { width: 87px; }
.p6 { width: 98px; }
.p7 { width: 4px; border-right: 0; }
.gripper { position: absolute; right: 0; bottom: 0; width: 36px; height: 36px; }

/* Help balloon glyph inside the icon */
.help-q { font: 700 36px "Liberation Serif", serif; fill: #000080; text-anchor: middle; }

/* Annotations */
.annot { position: absolute; left: 0; top: 0; width: 2000px; height: 1500px; pointer-events: none; }
.annot-line { fill: none; stroke: #f00; stroke-width: 7; }
.annot-oval { fill: none; stroke: #f00; stroke-width: 8; }
```
